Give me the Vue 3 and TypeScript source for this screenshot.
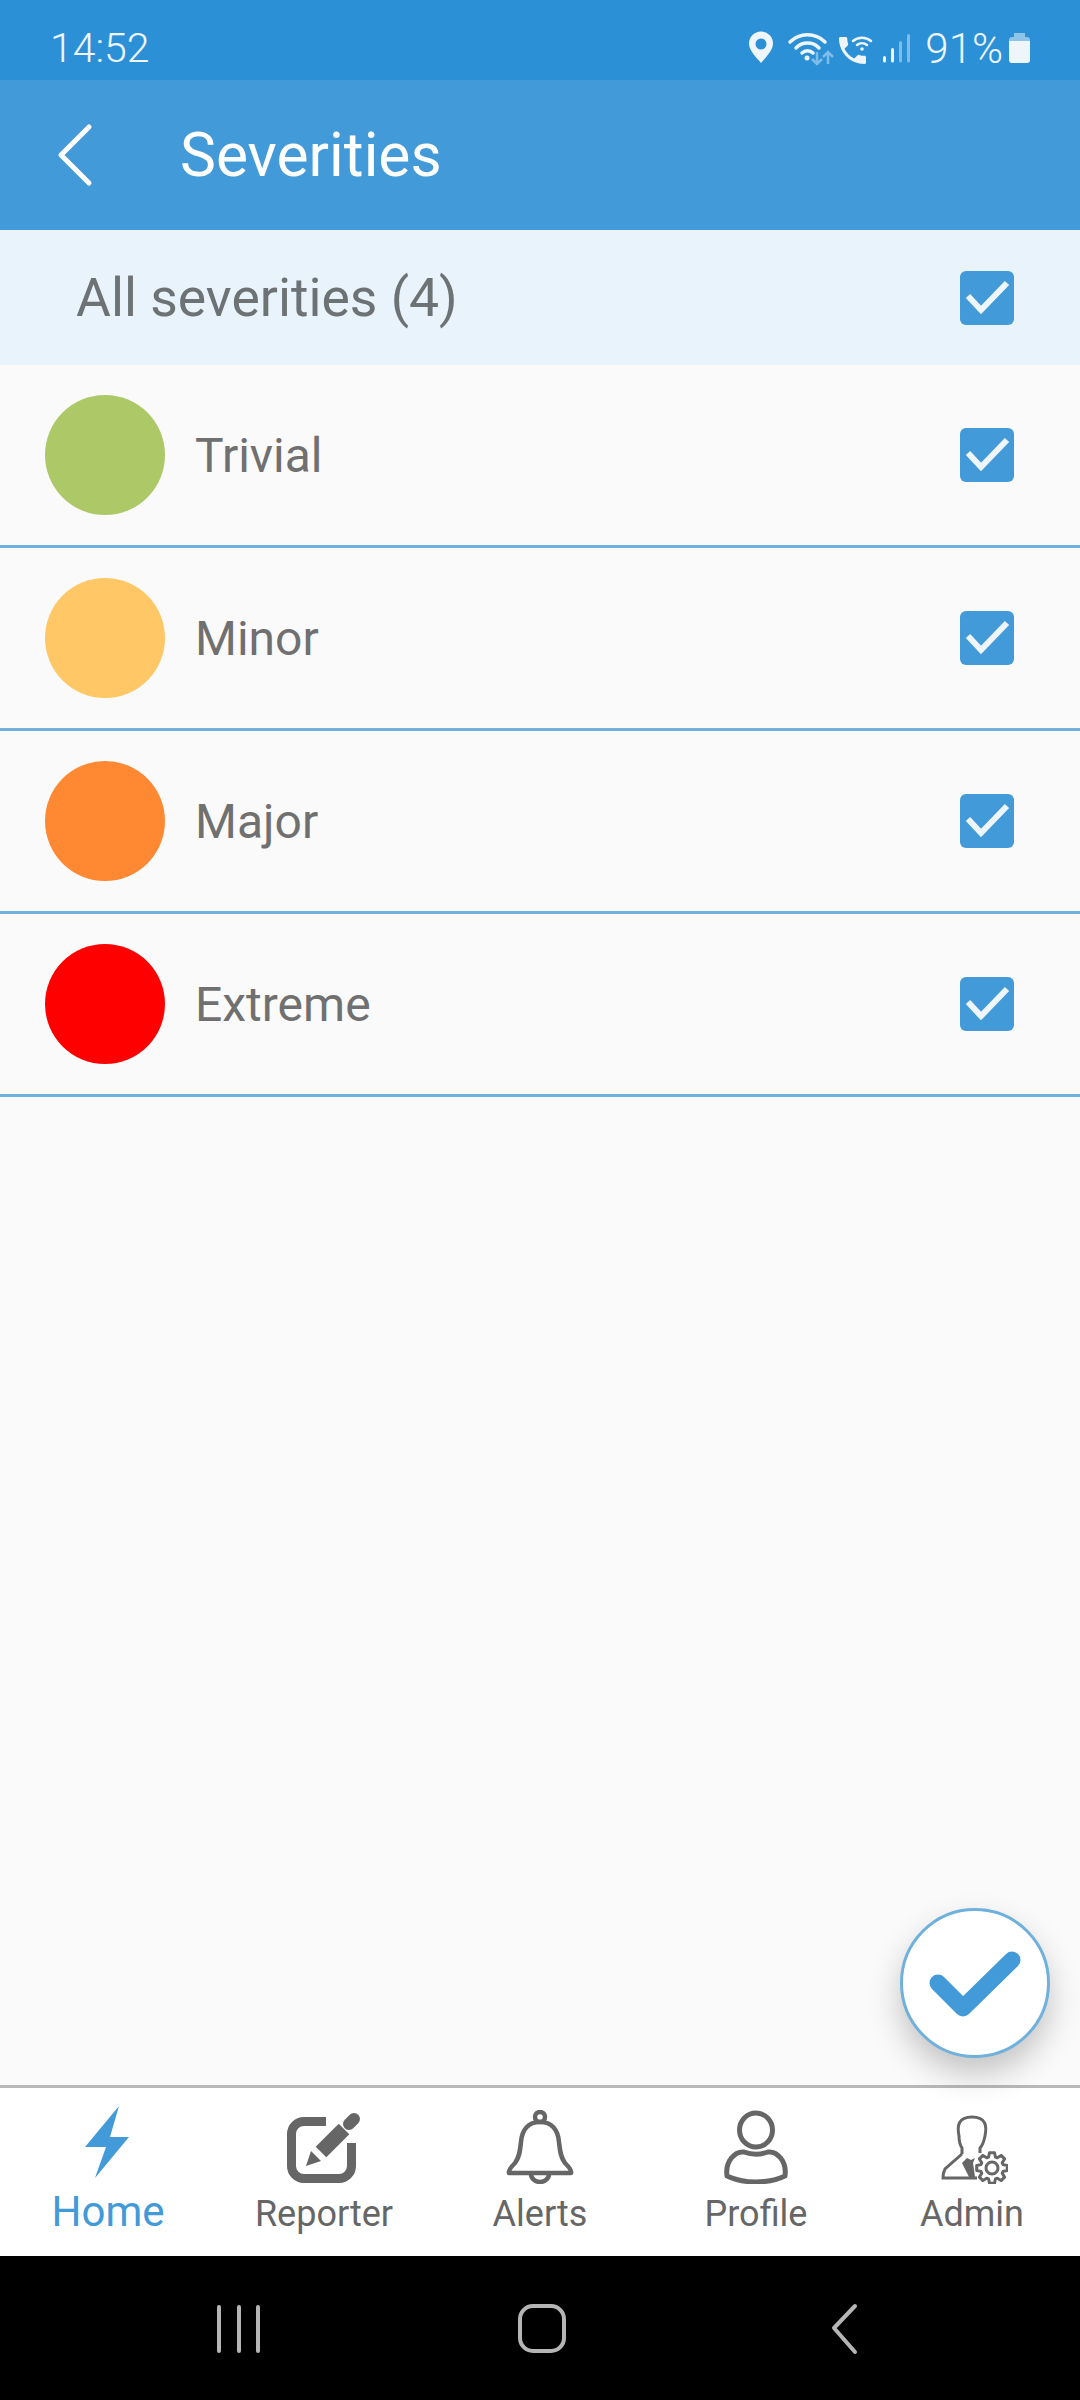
<template>
  <div class="phone">
    <div class="status-bar">
      <span class="time">14:52</span>
      <div class="status-right">
        <svg class="status-icons" width="170" height="40" viewBox="745 28 170 40" fill="none">
          <path d="M761 63c-7-8-12-13.500-12-19.500a12 12 0 0 1 24 0c0 6-5 11.500-12 19.500z" fill="#eef6fc" />
          <circle cx="761" cy="44" r="5.500" fill="#2b90d6" />
          <g stroke="#eef6fc" stroke-width="3.500" stroke-linecap="round">
            <path d="M790 42a25 25 0 0 1 35 0" />
            <path d="M796 48a16 16 0 0 1 23 0" />
            <path d="M802 53a8 8 0 0 1 11 0" />
          </g>
          <circle cx="807" cy="58" r="2.500" fill="#eef6fc" />
          <g stroke="#7fbce8" stroke-width="2.500">
            <path d="M817 52v12M812 59l5 5 5-5" />
            <path d="M828 64V52M823 57l5-5 5 5" />
          </g>
          <path
            transform="translate(834.500 32.500) scale(1.500)"
            d="M6.620 10.790c1.440 2.830 3.760 5.140 6.590 6.590l2.200-2.200c.270-.270.670-.360 1.020-.240 1.120.370 2.330.570 3.570.570.550 0 1 .450 1 1V20c0 .550-.450 1-1 1-9.390 0-17-7.610-17-17 0-.550.450-1 1-1h3.500c.550 0 1 .450 1 1 0 1.250.200 2.450.570 3.570.110.350.030.740-.250 1.020l-2.200 2.200z"
            fill="#eef6fc"
          />
          <g stroke="#eef6fc" stroke-width="2.500" stroke-linecap="round">
            <path d="M853 41a14 14 0 0 1 18 0" />
            <path d="M857 45a8 8 0 0 1 10 0" />
          </g>
          <circle cx="862" cy="49" r="1.800" fill="#eef6fc" />
          <rect x="883" y="56" width="3" height="6.500" rx="1.500" fill="#eef6fc" />
          <rect x="891" y="48" width="3" height="14.500" rx="1.500" fill="#eef6fc" />
          <rect x="899" y="41" width="3" height="21.500" rx="1.500" fill="#7fbce8" />
          <rect x="907" y="34" width="3" height="28.500" rx="1.500" fill="#7fbce8" />
        </svg>
        <span class="battery-text">91%</span>
        <svg width="21" height="30" viewBox="0 0 21 30">
          <path d="M5 0h11v4h2a3 3 0 0 1 3 3v3H0V7a3 3 0 0 1 3-3h2z" fill="#8fc4ea" />
          <path d="M0 8h21v19a3 3 0 0 1-3 3H3a3 3 0 0 1-3-3z" fill="#eef6fc" />
        </svg>
      </div>
    </div>

    <header class="app-header">
      <svg class="back" width="40" height="64" viewBox="0 0 40 64" fill="none">
        <path d="M34 4L6 32l28 28" stroke="#fff" stroke-width="5" stroke-linecap="round" stroke-linejoin="round" />
      </svg>
      <h1 class="title">Severities</h1>
    </header>

    <main class="content">
      <div class="all-row">
        <span class="all-label">All severities ({{ severities.length }})</span>
        <span class="checkbox">
          <svg width="54" height="54" viewBox="0 0 54 54" fill="none">
            <path d="M8 25l13 14 26-27" stroke="#eef6fc" stroke-width="6" />
          </svg>
        </span>
      </div>

      <div v-for="item in severities" :key="item.name" class="row">
        <span class="dot" :style="{ background: item.color }"></span>
        <span class="row-label">{{ item.name }}</span>
        <span class="checkbox">
          <svg width="54" height="54" viewBox="0 0 54 54" fill="none">
            <path d="M8 25l13 14 26-27" stroke="#eef6fc" stroke-width="6" />
          </svg>
        </span>
      </div>

      <button class="fab">
        <svg width="144" height="144" viewBox="0 0 144 144" fill="none">
          <path d="M35 72l25 25 49-48" stroke="#429ad9" stroke-width="17" stroke-linecap="round" stroke-linejoin="round" />
        </svg>
      </button>
    </main>

    <nav class="tabs">
      <div class="tab active">
        <div class="tab-icon">
          <svg class="bolt" width="46" height="74" viewBox="0 0 46 74">
            <path d="M34 0L0 41h21L10 72l34-41H25z" fill="#429ad9" />
          </svg>
        </div>
        <span class="tab-label">Home</span>
      </div>

      <div class="tab">
        <div class="tab-icon">
          <svg width="80" height="76" viewBox="0 -2 80 76" fill="none">
            <path d="M42 11.500H20A12.500 12.500 0 0 0 7.500 24v32A12.500 12.500 0 0 0 20 68.500h35A12.500 12.500 0 0 0 67.500 56V33" stroke="#666" stroke-width="9" />
            <path d="M37 42l23-23" stroke="#666" stroke-width="15" />
            <path d="M65 14l5-5" stroke="#666" stroke-width="12" stroke-linecap="round" />
            <path d="M22 56l5-15 10 10z" fill="#666" />
          </svg>
        </div>
        <span class="tab-label">Reporter</span>
      </div>

      <div class="tab">
        <div class="tab-icon">
          <svg width="68" height="74" viewBox="0 0 68 74" fill="none" stroke="#666" stroke-width="4.500">
            <circle cx="34" cy="7" r="5" />
            <path d="M34 12c-12 0-18 8-19 20-1 10-2 16-6 21-3 3-7 7-6 10h62c1-3-3-7-6-10-4-5-5-11-6-21-1-12-7-20-19-20z" stroke-linejoin="round" />
            <path d="M25 64a9 8 0 0 0 18 0" />
          </svg>
        </div>
        <span class="tab-label">Alerts</span>
      </div>

      <div class="tab">
        <div class="tab-icon">
          <svg width="66" height="74" viewBox="0 -1 66 74" fill="none" stroke="#666" stroke-width="5">
            <ellipse cx="33" cy="19" rx="16.500" ry="17" />
            <path d="M4 65C2 50 12 40 21 41c8 3 16 3 24 0 9-1 19 9 17 24-17 8-41 8-58 0z" stroke-linejoin="round" />
          </svg>
        </div>
        <span class="tab-label">Profile</span>
      </div>

      <div class="tab">
        <div class="tab-icon">
          <svg width="72" height="74" viewBox="0 0 72 74" fill="none" stroke="#666" stroke-width="3">
            <path d="M26 44v-6c-2-3-3-7-3-12-2-10-1-19 13-19s15 9 13 19c-1 5-2 9-5 12v5" />
            <path d="M26 44L9 59c-1 2-2 5-2 9h34" />
            <path d="M31 48l-5 5 7 14h6l-2-14 2-5-4 2z" fill="#666" stroke="none" />
            <path :d="gearPath" stroke-linejoin="round" fill="#fff" />
            <circle cx="56" cy="58" r="6" />
          </svg>
        </div>
        <span class="tab-label">Admin</span>
      </div>
    </nav>

    <div class="system-nav">
      <svg width="1080" height="144" viewBox="0 0 1080 144" fill="none" stroke="#b5b5b5" stroke-width="4" stroke-linecap="round">
        <path d="M219 51v44M239 51v44M258 51v44" />
        <rect x="520" y="50" width="44" height="45" rx="13" />
        <path d="M855 50L834 72l21 24" stroke-linejoin="round" />
      </svg>
    </div>
  </div>
</template>

<script setup lang="ts">
interface Severity {
  name: string
  color: string
}

const severities: Severity[] = [
  { name: 'Trivial', color: '#adc967' },
  { name: 'Minor', color: '#ffc766' },
  { name: 'Major', color: '#ff8833' },
  { name: 'Extreme', color: '#ff0000' },
]

function buildGear(cx: number, cy: number, outer: number, inner: number, teeth: number): string {
  const pts: string[] = []
  const step = (Math.PI * 2) / teeth
  for (let i = 0; i < teeth; i++) {
    const a = i * step
    const offsets: [number, number][] = [
      [-0.32, inner],
      [-0.17, outer],
      [0.17, outer],
      [0.32, inner],
    ]
    for (const [o, r] of offsets) {
      const x = cx + r * Math.cos(a + o * step * 1.2)
      const y = cy + r * Math.sin(a + o * step * 1.2)
      pts.push(`${x.toFixed(1)} ${y.toFixed(1)}`)
    }
  }
  return `M${pts.join('L')}Z`
}

const gearPath = buildGear(56, 58, 15.5, 11.5, 8)
</script>

<style scoped>
.phone {
  width: 1080px;
  height: 2400px;
  display: flex;
  flex-direction: column;
  background: #fafafa;
  font-family: Roboto, "Noto Sans", sans-serif;
  overflow: hidden;
}

.status-bar {
  height: 80px;
  flex: none;
  background: #2b90d6;
  color: #eef6fc;
  display: flex;
  align-items: center;
  justify-content: space-between;
  padding: 16px 50px 0;
  box-sizing: border-box;
}

.time {
  font-size: 41px;
  font-weight: 300;
}

.status-right {
  display: flex;
  align-items: center;
}

.status-icons {
  margin-right: 10px;
}

.battery-text {
  font-size: 42px;
  font-weight: 300;
  margin-right: 6px;
}

.app-header {
  height: 150px;
  flex: none;
  background: #429ad9;
  display: flex;
  align-items: center;
  padding-left: 55px;
  box-sizing: border-box;
}

.back {
  margin-right: 85px;
}

.title {
  margin: 0;
  font-size: 60.500px;
  font-weight: 400;
  color: #fff;
}

.content {
  flex: 1;
  position: relative;
}

.all-row {
  height: 135px;
  background: #e9f3fb;
  display: flex;
  align-items: center;
  justify-content: space-between;
  padding: 0 66px 0 76px;
}

.all-label {
  font-size: 53.500px;
  color: #6d7275;
}

.row {
  height: 183px;
  box-sizing: border-box;
  border-bottom: 3px solid #6fb0dc;
  display: flex;
  align-items: center;
  padding: 0 66px 0 45px;
}

.dot {
  width: 120px;
  height: 120px;
  border-radius: 50%;
  flex: none;
}

.row-label {
  flex: 1;
  margin-left: 30px;
  font-size: 48px;
  color: #707070;
}

.checkbox {
  width: 54px;
  height: 54px;
  flex: none;
  border-radius: 6px;
  background: #429ad9;
  display: block;
}

.checkbox svg {
  display: block;
}

.fab {
  position: absolute;
  right: 30px;
  bottom: 27px;
  width: 150px;
  height: 150px;
  box-sizing: border-box;
  padding: 0;
  border: 3px solid #6fb0dc;
  border-radius: 50%;
  background: #fff;
  box-shadow: 0 16px 32px rgba(0, 0, 0, 0.22);
}

.fab svg {
  display: block;
}

.tabs {
  height: 171px;
  flex: none;
  box-sizing: border-box;
  border-top: 3px solid #b8b8b8;
  background: #fff;
  display: grid;
  grid-template-columns: repeat(5, 1fr);
}

.tab {
  display: flex;
  flex-direction: column;
  align-items: center;
  padding-top: 20px;
  color: #666;
}

.tab-icon {
  height: 76px;
  display: flex;
  align-items: flex-end;
}

.tab-icon svg {
  display: block;
}

.tab-icon .bolt {
  margin-bottom: 4px;
}

.tab-label {
  margin-top: 7px;
  font-size: 36px;
  line-height: 46px;
}

.tab.active {
  color: #429ad9;
}

.tab.active .tab-label {
  font-size: 42px;
  margin-top: 5px;
}

.system-nav {
  height: 144px;
  flex: none;
  background: #000;
}

.system-nav svg {
  display: block;
}
</style>
